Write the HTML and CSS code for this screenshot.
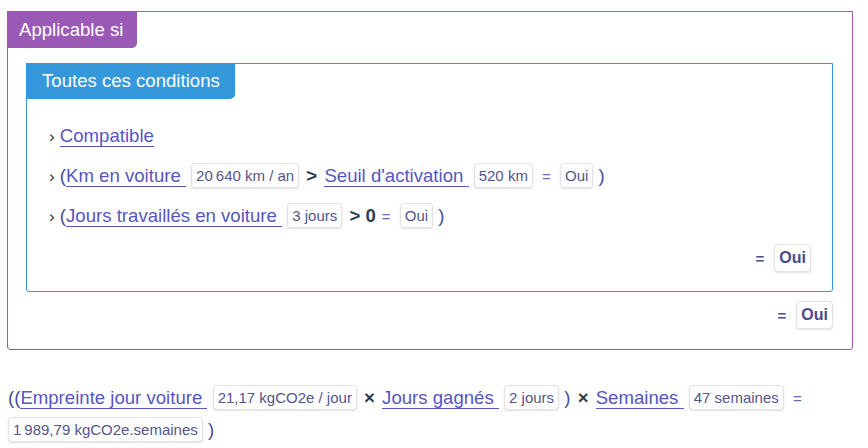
FILE: index.html
```html
<!DOCTYPE html>
<html lang="fr">
<head>
  <meta charset="UTF-8" />
  <title>Applicable si</title>
  <link rel="stylesheet" href="styles.css">
</head>
<body>
  <div class="block purple">
    <div class="label purple-bg">Applicable si</div>
    <div class="block blue">
      <div class="label blue-bg">Toutes ces conditions</div>
      <ul class="conditions">
        <li><span class="chev">›</span> <a class="ref">Compatible</a></li>
        <li><span class="chev">›</span> <span class="paren">(</span><a class="ref">Km en voiture </a> <span class="val">20&#8239;640 km / an</span> <span class="op">&gt;</span> <a class="ref">Seuil d'activation </a> <span class="val">520 km</span> <span class="eq">=</span> <span class="val">Oui</span> <span class="paren">)</span></li>
        <li><span class="chev">›</span> <span class="paren">(</span><a class="ref">Jours travaillés en voiture </a> <span class="val">3 jours</span> <span class="op">&gt; 0</span><span class="eq">=</span> <span class="val">Oui</span> <span class="paren">)</span></li>
      </ul>
      <div class="result">= <span class="val strong">Oui</span></div>
    </div>
    <div class="result outer">= <span class="val strong">Oui</span></div>
  </div>

  <div class="formula">
    <span class="paren">((</span><a class="ref">Empreinte jour voiture </a> <span class="val">21,17 kgCO2e / jour</span> <span class="op">×</span> <a class="ref">Jours gagnés </a> <span class="val">2 jours</span> <span class="paren">)</span> <span class="op">×</span> <a class="ref">Semaines </a> <span class="val">47 semaines</span> <span class="eq">=</span>
    <span class="val">1&#8239;989,79 kgCO2e.semaines</span> <span class="paren">)</span>
  </div>
</body>
</html>
```

FILE: styles.css
```css
body {
  margin: 11px 15px 0 7px;
  font-family: "Liberation Sans", Arial, sans-serif;
  font-size: 18.6px;
  color: #4b4b9b;
  background: #fff;
}
.block {
  border: 1px solid;
  border-radius: 0 0 3px 3px;
}
.purple {
  border-color: #9b59b6;
  padding: 0 19px 20px 18px;
}
.blue {
  border-color: #3498db;
  margin: 15px 0 0 0;
  padding: 0 21px 0 0;
}
.label {
  display: inline-block;
  color: #fff;
  height: 37px;
  line-height: 37px;
  padding: 0 14px 0 12px;
  border-radius: 0 0 5px 0;
  margin: -1px 0 0 -1px;
}
.purple > .label {
  margin-left: -19px;
}
.purple-bg {
  background: #9b59b6;
}
.blue-bg {
  background: #3498db;
  height: 36px;
  line-height: 36px;
  padding: 0 15px 0 16px;
}
.conditions {
  list-style: none;
  margin: 22px 0 0 0;
  padding: 0 0 0 22px;
}
.conditions li {
  height: 40px;
  line-height: 30px;
}
.chev {
  color: #333;
  font-size: 17px;
}
.ref {
  color: #5756c0;
  border-bottom: 1px solid #5756c0;
  text-decoration: none;
  white-space: pre;
}
.val {
  display: inline-block;
  font-size: 15px;
  line-height: 23px;
  padding: 0 4px;
  border: 1px solid #e3e3e3;
  border-radius: 4px;
  box-shadow: 0 1px 2px rgba(0, 0, 0, 0.12);
  color: #55558a;
  vertical-align: 1px;
  background: #fff;
}
.op {
  color: #2c3e50;
  font-weight: bold;
  margin: 0 2px;
}
.eq {
  color: #6c6cb0;
  font-size: 15px;
  margin: 0 4px;
}
.paren {
  color: #4b4b9b;
}
.result {
  text-align: right;
  font-size: 15px;
  font-weight: bold;
  color: #4a4a8c;
  margin: 3px 0 0 0;
  padding-bottom: 19px;
}
.result .val {
  font-size: 16px;
  font-weight: bold;
  color: #4a4a8c;
  line-height: 26px;
  margin-left: 6px;
}
.outer {
  margin: 9px 0 0 0;
  padding: 0;
}
.formula {
  margin: 32px 0 0 1px;
  line-height: 31px;
}
```
